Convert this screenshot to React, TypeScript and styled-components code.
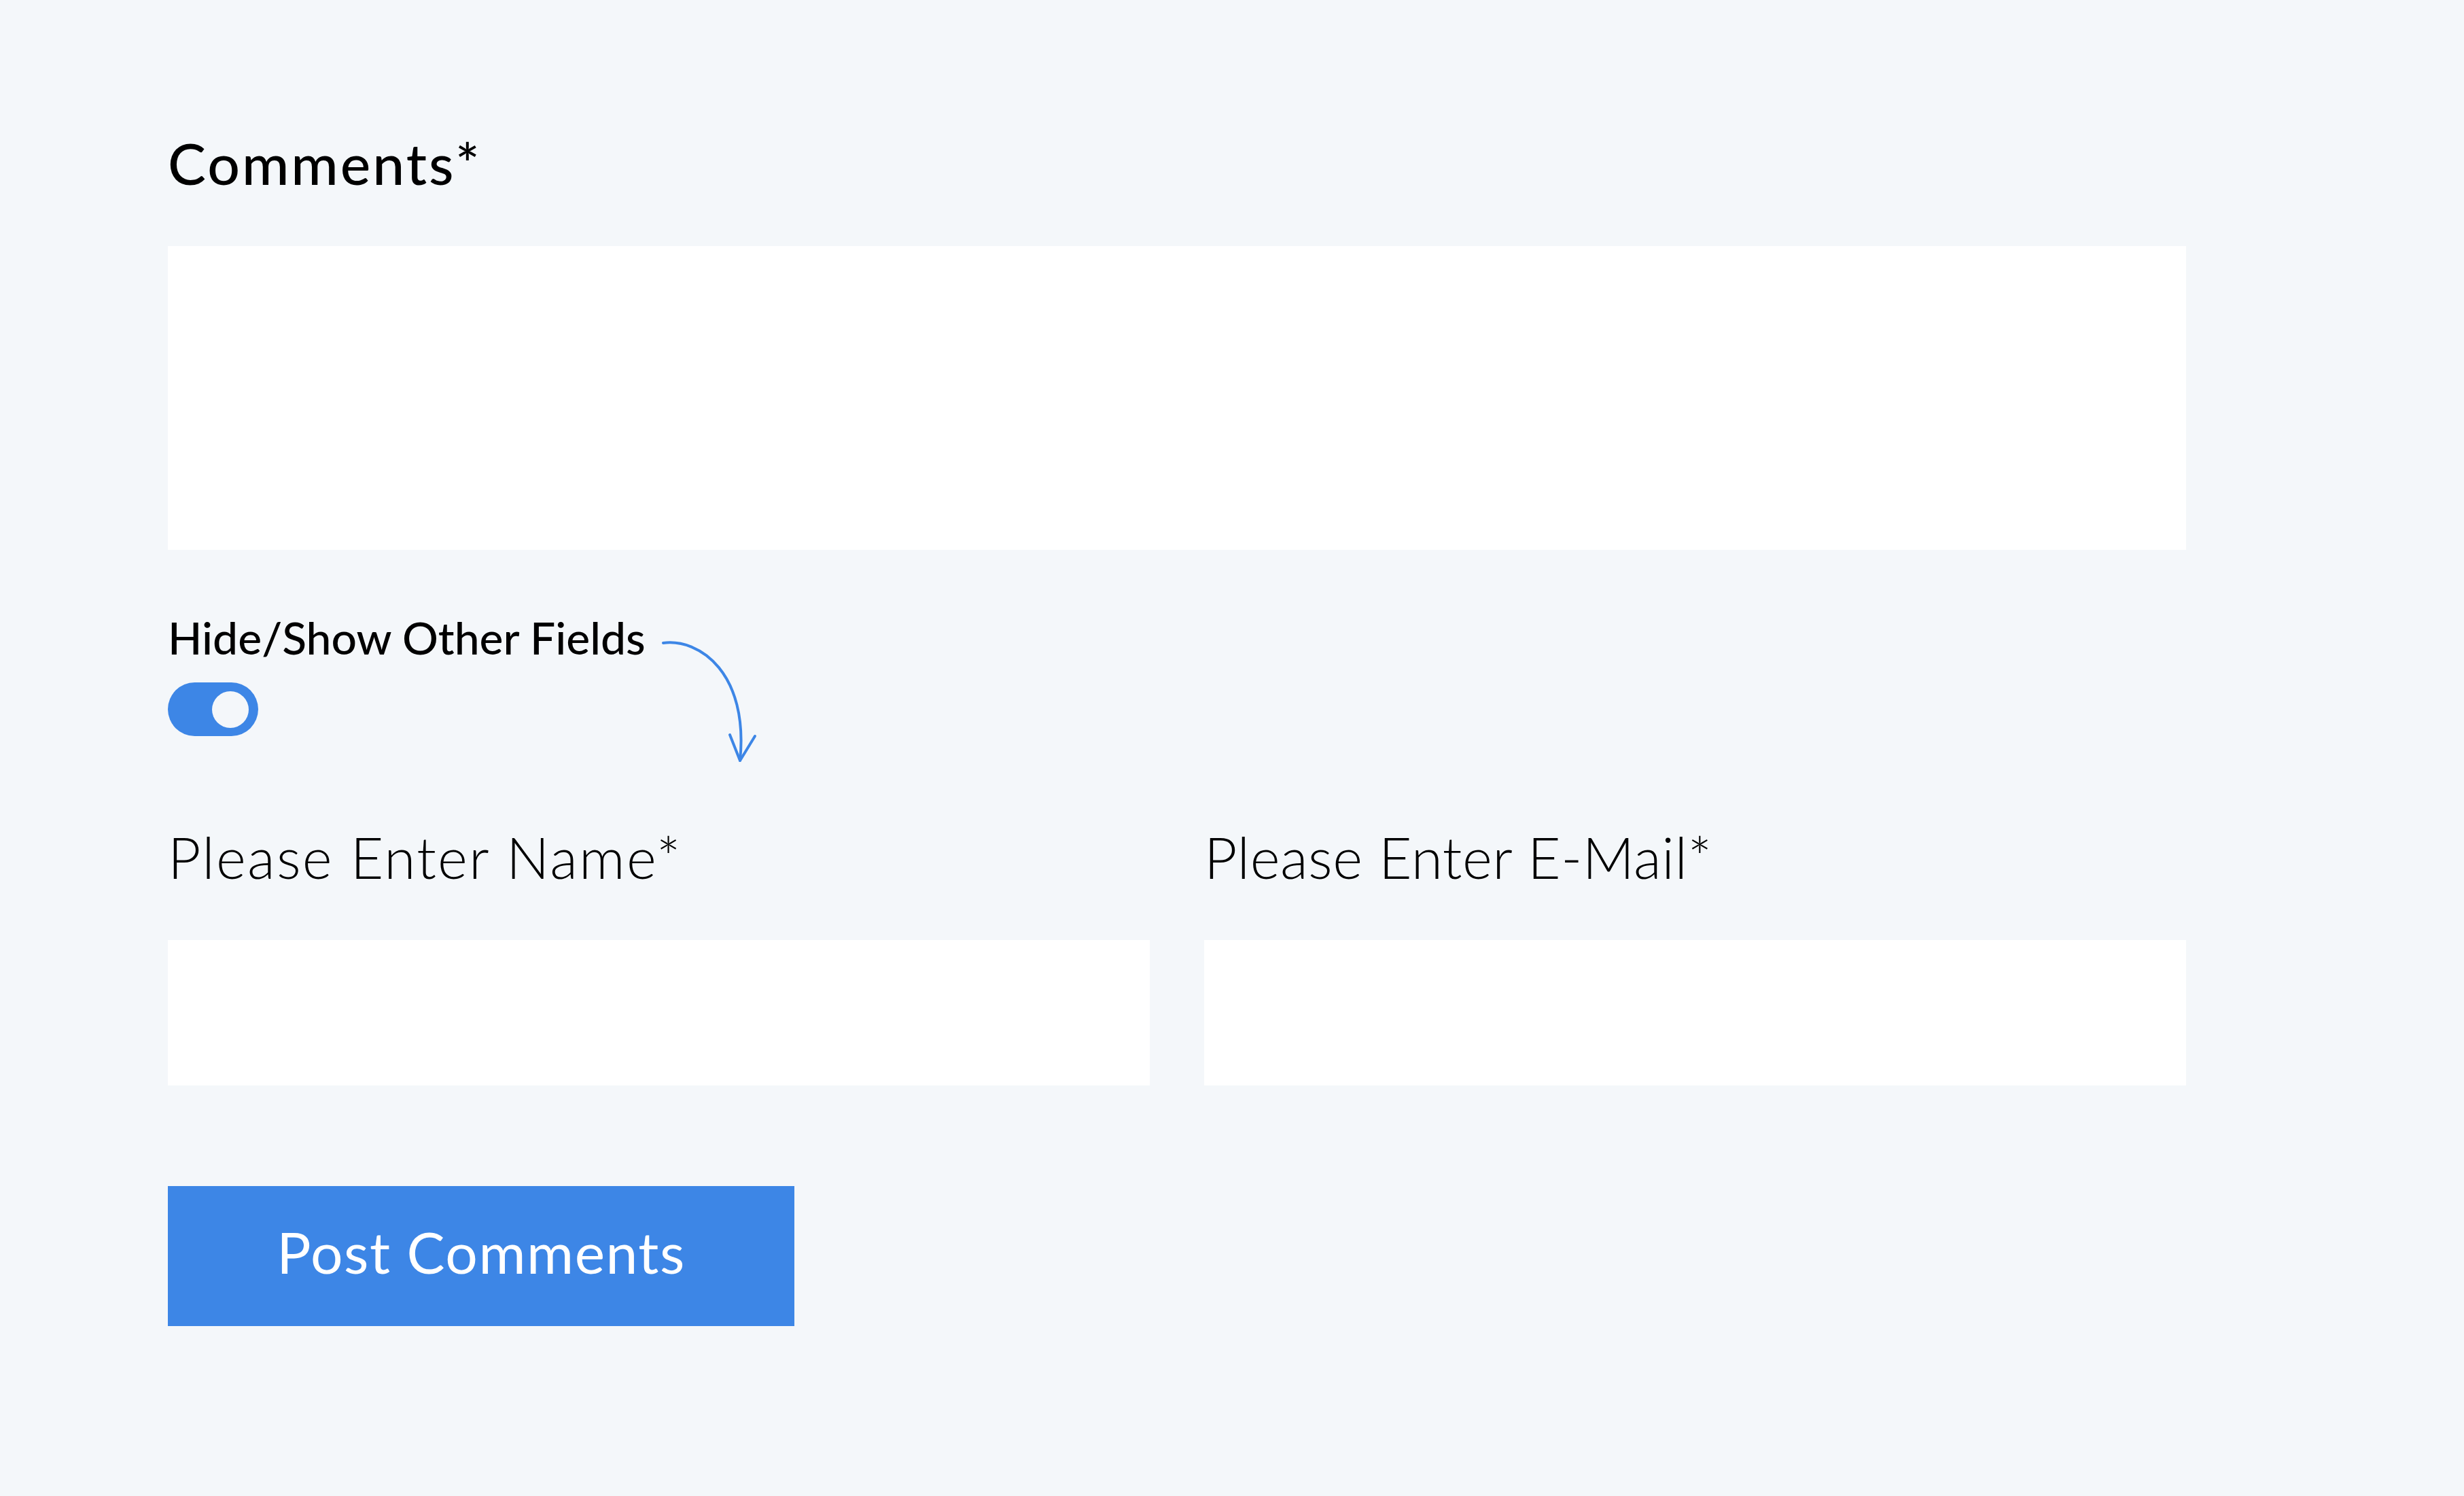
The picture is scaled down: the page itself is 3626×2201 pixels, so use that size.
import { useState } from "react";
import styled, { createGlobalStyle } from "styled-components";

const GlobalStyle = createGlobalStyle`
  html, body {
    margin: 0;
    padding: 0;
    background: #f4f7fa;
  }
  * {
    box-sizing: border-box;
  }
`;

const Page = styled.div`
  min-height: 100vh;
  background: #f4f7fa;
  padding: 198px 0 0 247px;
  font-family: "Lato", "Liberation Sans", sans-serif;
  color: #000;
`;

const Form = styled.form`
  width: 2970px;
  display: flex;
  flex-direction: column;
`;

const Label = styled.label<{ $weight?: number; $size?: number; $spacing?: number }>`
  display: block;
  font-size: ${(p) => p.$size || 84}px;
  line-height: 1;
  font-weight: ${(p) => p.$weight || 500};
  letter-spacing: ${(p) => p.$spacing || 0}px;
`;

const TextArea = styled.textarea`
  display: block;
  width: 100%;
  height: 447px;
  margin-top: 80px;
  border: none;
  outline: none;
  background: #fff;
  resize: none;
  font: inherit;
  font-size: 60px;
  padding: 30px;
`;

const ToggleSection = styled.div`
  position: relative;
  margin-top: 96px;
  display: flex;
  flex-direction: column;
  align-items: flex-start;
  gap: 33px;
`;

const Switch = styled.button<{ $on: boolean }>`
  width: 133px;
  height: 79px;
  border: none;
  padding: 0 14px;
  border-radius: 40px;
  background: ${(p) => (p.$on ? "#3d86e6" : "#c9d3df")};
  display: flex;
  align-items: center;
  justify-content: ${(p) => (p.$on ? "flex-end" : "flex-start")};
  cursor: pointer;
`;

const Knob = styled.span`
  width: 54px;
  height: 54px;
  border-radius: 50%;
  background: #f4f7fa;
`;

const Arrow = styled.svg`
  position: absolute;
  left: 713px;
  top: 26px;
  width: 160px;
  height: 200px;
  overflow: visible;
`;

const FieldRow = styled.div`
  margin-top: 136px;
  display: grid;
  grid-template-columns: 1fr 1fr;
  column-gap: 80px;
`;

const Field = styled.div`
  display: flex;
  flex-direction: column;
`;

const Input = styled.input`
  display: block;
  width: 100%;
  height: 214px;
  margin-top: 80px;
  border: none;
  outline: none;
  background: #fff;
  font: inherit;
  font-size: 60px;
  padding: 0 30px;
`;

const SubmitButton = styled.button`
  margin-top: 148px;
  width: 922px;
  height: 206px;
  border: none;
  padding: 0 0 12px;
  background: #3d86e6;
  color: #fff;
  font-family: "Lato", "Liberation Sans", sans-serif;
  font-size: 84px;
  font-weight: 400;
  letter-spacing: 1.5px;
  line-height: 1;
  cursor: pointer;
`;

export default function App() {
  const [showFields, setShowFields] = useState(true);

  return (
    <>
      <GlobalStyle />
      <Page>
        <Form onSubmit={(e) => e.preventDefault()}>
          <Label $weight={500} $spacing={3}>
            Comments*
          </Label>
          <TextArea />

          <ToggleSection>
            <Label $size={66} $weight={500}>
              Hide/Show Other Fields
            </Label>
            <Switch
              type="button"
              $on={showFields}
              onClick={() => setShowFields(!showFields)}
            >
              <Knob />
            </Switch>
            <Arrow viewBox="0 0 160 200">
              <path
                d="M16 15 C 70 8, 142 60, 129 188"
                fill="none"
                stroke="#3d86e6"
                strokeWidth="4"
                strokeLinecap="round"
              />
              <path
                d="M114 150 L129 188 L151 152"
                fill="none"
                stroke="#3d86e6"
                strokeWidth="4"
                strokeLinecap="round"
                strokeLinejoin="round"
              />
            </Arrow>
          </ToggleSection>

          {showFields && (
            <FieldRow>
              <Field>
                <Label $weight={300} $spacing={2.2}>
                  Please Enter Name*
                </Label>
                <Input type="text" />
              </Field>
              <Field>
                <Label $weight={300} $spacing={0.5}>
                  Please Enter E-Mail*
                </Label>
                <Input type="email" />
              </Field>
            </FieldRow>
          )}

          <div>
            <SubmitButton type="submit">Post Comments</SubmitButton>
          </div>
        </Form>
      </Page>
    </>
  );
}
